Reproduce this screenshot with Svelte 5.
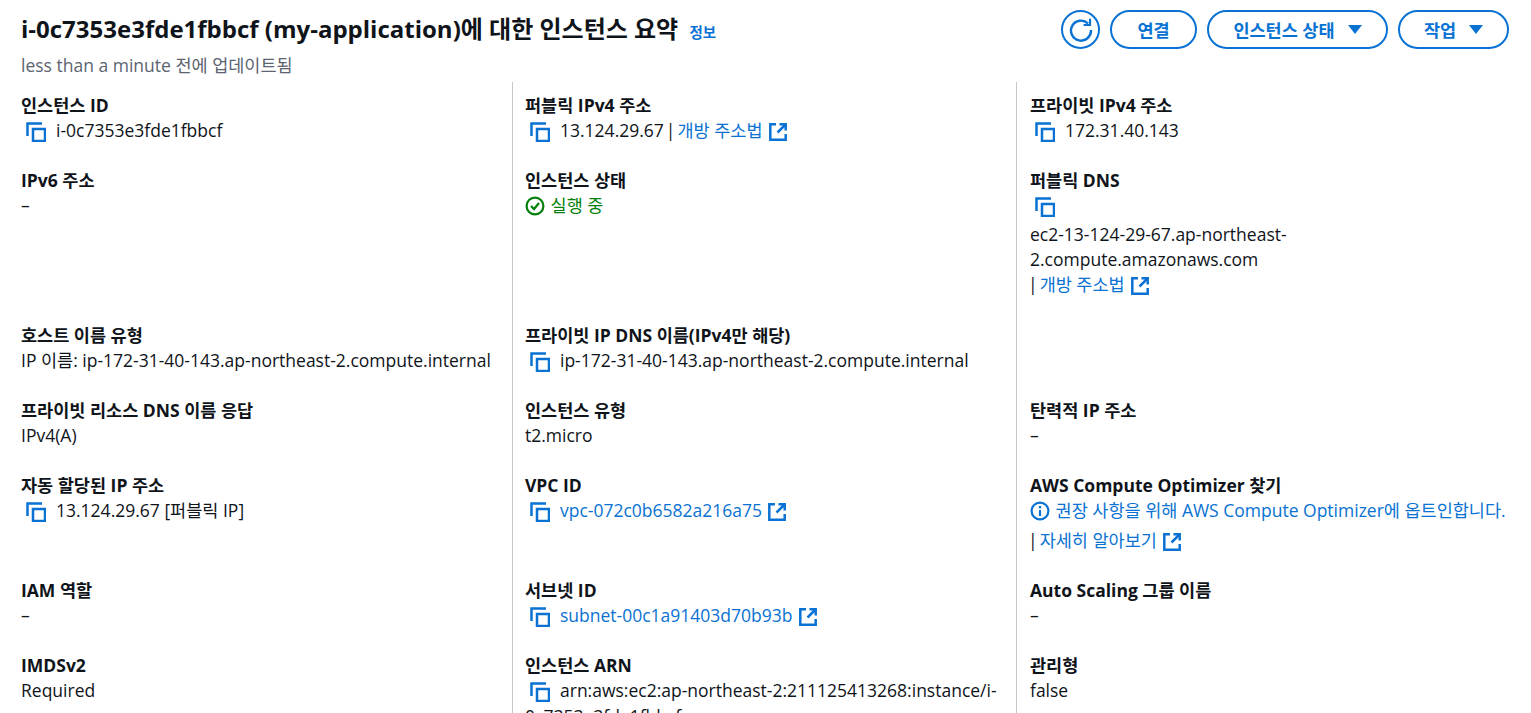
<script>
  // one entry per grid row, three columns
  const cells = [
    { label: '인스턴스 ID', copy: true, text: 'i-0c7353e3fde1fbbcf' },
    { label: '퍼블릭 IPv4 주소', copy: true, text: '13.124.29.67', pipe: true, link: '개방 주소법', ext: true },
    { label: '프라이빗 IPv4 주소', copy: true, text: '172.31.40.143' },

    { label: 'IPv6 주소', text: '–' },
    { label: '인스턴스 상태', status: '실행 중' },
    { label: '퍼블릭 DNS', dns: true },

    { label: '호스트 이름 유형', text: 'IP 이름: ip-172-31-40-143.ap-northeast-2.compute.internal' },
    { label: '프라이빗 IP DNS 이름(IPv4만 해당)', copy: true, text: 'ip-172-31-40-143.ap-northeast-2.compute.internal' },
    {},

    { label: '프라이빗 리소스 DNS 이름 응답', text: 'IPv4(A)' },
    { label: '인스턴스 유형', text: 't2.micro' },
    { label: '탄력적 IP 주소', text: '–' },

    { label: '자동 할당된 IP 주소', copy: true, text: '13.124.29.67 [퍼블릭 IP]' },
    { label: 'VPC ID', copy: true, link: 'vpc-072c0b6582a216a75', ext: true },
    { label: 'AWS Compute Optimizer 찾기', optimizer: true },

    { label: 'IAM 역할', text: '–' },
    { label: '서브넷 ID', copy: true, link: 'subnet-00c1a91403d70b93b', ext: true },
    { label: 'Auto Scaling 그룹 이름', text: '–' },

    { label: 'IMDSv2', text: 'Required' },
    { label: '인스턴스 ARN', copy: true, text: 'arn:aws:ec2:ap-northeast-2:211125413268:instance/i-0c7353e3fde1fbbcf', wrap: true },
    { label: '관리형', text: 'false' }
  ];
</script>

{#snippet copy()}
  <svg class="copy" viewBox="0 0 20 20" fill="none" stroke="currentColor" stroke-width="2.5">
    <path d="M1.5 14V1.5H16" />
    <rect x="7" y="7" width="12" height="12" />
  </svg>
{/snippet}

{#snippet external()}
  <svg class="external" viewBox="0 0 18 18" fill="none" stroke="currentColor" stroke-width="2.5">
    <path d="M7 1.3H1.3v15.4h15.4V11" />
    <path d="M10.5 1.3h6.2v6.2" />
    <path d="M16 2L8.5 9.5" />
  </svg>
{/snippet}

<div class="page">
  <header class="head">
    <div class="titles">
      <h1>i-0c7353e3fde1fbbcf (my-application)에 대한 인스턴스 요약 <a class="info">정보</a></h1>
      <p class="updated">less than a minute 전에 업데이트됨</p>
    </div>
    <div class="actions">
      <button class="btn round" aria-label="새로 고침">
        <svg viewBox="0 0 24 24" width="24" height="24" fill="none" stroke="currentColor" stroke-width="2.4">
          <path d="M19 5.5A10 10 0 1 0 22 12" />
          <path d="M21 0.8V7h-6.4" stroke-width="2.2" />
        </svg>
      </button>
      <button class="btn connect">연결</button>
      <button class="btn state">인스턴스 상태<span class="caret"></span></button>
      <button class="btn work">작업<span class="caret"></span></button>
    </div>
  </header>

  <section class="grid">
    {#each cells as c, i}
      <div class="cell" class:col2={i % 3 === 1} class:col3={i % 3 === 2}>
        {#if c.label}<div class="label">{c.label}</div>{/if}
        {#if c.dns}
          <div class="line">{@render copy()}</div>
          <div class="plain">ec2-13-124-29-67.ap-northeast-<br />2.compute.amazonaws.com</div>
          <div class="line last"><span class="pipe first">|</span><a class="link">개방 주소법</a>{@render external()}</div>
        {:else if c.optimizer}
          <div class="line">
            <svg class="infoicon" viewBox="0 0 20 20" fill="none" stroke="currentColor" stroke-width="2.2">
              <circle cx="10" cy="10" r="8.4" />
              <path d="M10 9v6" />
              <path d="M10 5v2.4" />
            </svg>
            <a class="link">권장 사항을 위해 AWS Compute Optimizer에 옵트인합니다.</a>
          </div>
          <div class="line opt2"><span class="pipe first">|</span><a class="link">자세히 알아보기</a>{@render external()}</div>
        {:else if c.status}
          <div class="line ok">
            <svg class="okicon" viewBox="0 0 20 20" fill="none" stroke="currentColor" stroke-width="2.2">
              <circle cx="10" cy="10" r="8.4" />
              <path d="M6 10l3 3 5-6" />
            </svg>
            {c.status}
          </div>
        {:else if c.wrap}
          <div class="wrapline">{@render copy()}{c.text}</div>
        {:else if c.label}
          <div class="line">
            {#if c.copy}{@render copy()}{/if}{#if c.text}<span class="txt">{c.text}</span>{/if}{#if c.pipe}<span class="pipe">|</span>{/if}{#if c.link}<a class="link">{c.link}</a>{/if}{#if c.ext}{@render external()}{/if}
          </div>
        {/if}
      </div>
    {/each}
  </section>
</div>

<style>
  :global(body) {
    background: #fff;
    overflow: hidden;
  }

  .page {
    height: 713px;
    overflow: hidden;
    font-family: "Open Sans", "Noto Sans CJK KR", sans-serif;
    font-size: 17.5px;
    color: #0f141a;
  }

  .head {
    display: flex;
    justify-content: space-between;
    align-items: flex-start;
    padding: 10px 22px 0 21px;
    height: 82px;
    box-sizing: border-box;
  }

  h1 {
    margin: 0;
    font-size: 24px;
    line-height: 38px;
    font-weight: 700;
  }

  .info {
    font-size: 14.5px;
    font-weight: 700;
    color: #0972d3;
    margin-left: 5px;
  }

  .updated {
    margin: 1px 0 0;
    line-height: 24px;
    color: #5b6470;
  }

  .actions {
    display: flex;
    gap: 10px;
  }

  .btn {
    height: 39px;
    box-sizing: border-box;
    border: 2px solid #0972d3;
    border-radius: 20px;
    background: #fff;
    color: #0972d3;
    font: inherit;
    font-weight: 700;
    display: flex;
    align-items: center;
    justify-content: center;
    padding: 0;
  }

  .round {
    width: 39px;
  }

  .connect {
    width: 87px;
  }

  .state {
    width: 181px;
  }

  .work {
    width: 111px;
  }

  .caret {
    width: 0;
    height: 0;
    margin-left: 13px;
    border-left: 7px solid transparent;
    border-right: 7px solid transparent;
    border-top: 9px solid #0972d3;
  }

  .grid {
    display: grid;
    grid-template-columns: 512px 504px 515px;
  }

  .cell {
    padding: 11px 4px 14px 21px;
    min-width: 0;
  }

  .col2 {
    padding-left: 12px;
    border-left: 1px solid #c6c6cd;
  }

  .col3 {
    padding-left: 13px;
    border-left: 1px solid #c6c6cd;
  }

  .label {
    font-weight: 700;
    line-height: 24px;
  }

  .line {
    line-height: 26px;
    min-height: 26px;
    white-space: nowrap;
  }

  .plain {
    line-height: 25px;
    margin-top: 4px;
  }

  .last {
    margin: -1px 0 1px;
  }

  .opt2 {
    margin-top: 4px;
  }

  .pipe {
    margin: 0 2px;
    color: #0f141a;
  }

  .pipe.first {
    margin: 0 2px 0 -2px;
  }

  .wrapline {
    line-height: 26px;
    margin-right: 8px;
    overflow-wrap: anywhere;
  }

  .link {
    color: #0972d3;
  }

  .ok {
    color: #037f0c;
  }

  .copy {
    width: 20px;
    height: 20px;
    margin: 0 10px 0 5px;
    vertical-align: -5px;
    color: #0972d3;
  }

  .external {
    width: 18px;
    height: 18px;
    margin-left: 6px;
    vertical-align: -4px;
    color: #0972d3;
  }

  .infoicon,
  .okicon {
    width: 20px;
    height: 20px;
    margin-right: 1px;
    vertical-align: -4px;
  }

  .infoicon {
    color: #0972d3;
  }
</style>
